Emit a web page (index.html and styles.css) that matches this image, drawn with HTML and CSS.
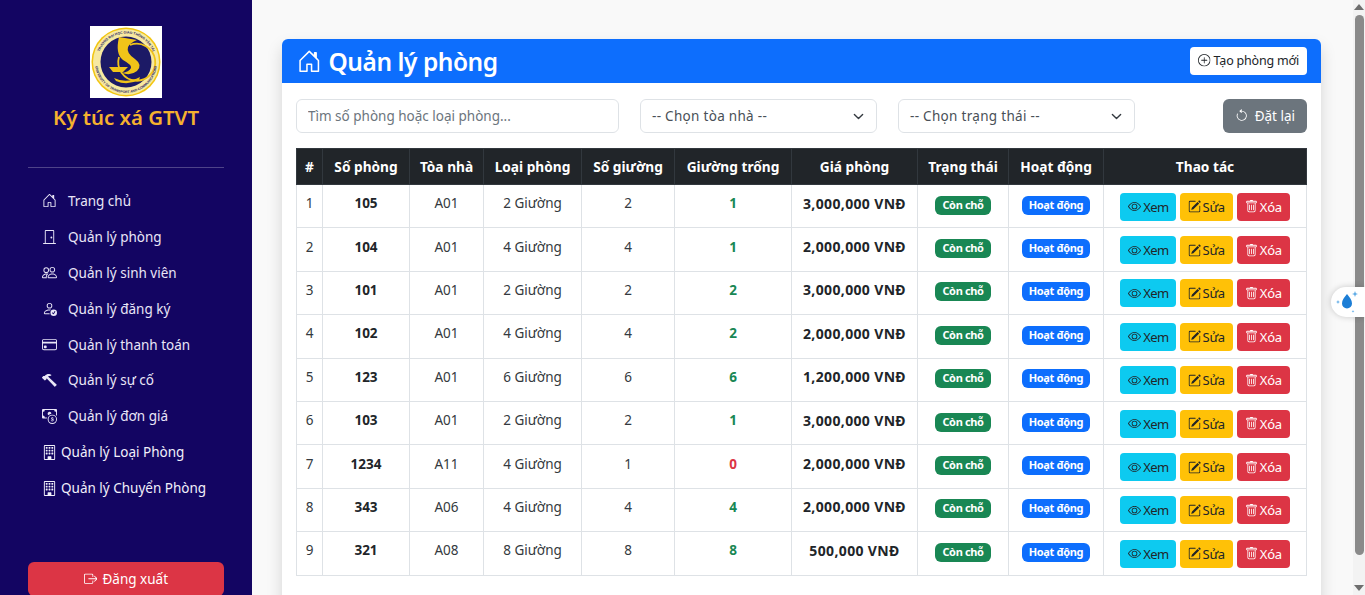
FILE: index.html
```html
<!DOCTYPE html>
<html lang="vi">
<head>
  <meta charset="UTF-8" />
  <meta name="viewport" content="width=device-width, initial-scale=1.0"/>
  <title>Quản lý phòng</title>
  <link rel="stylesheet" href="styles.css">
</head>
<body>
  <!-- icon sprite -->
  <svg class="sprite" xmlns="http://www.w3.org/2000/svg">
    <symbol id="i-house" viewBox="0 0 16 16"><path d="M8.354 1.146a.5.5 0 0 0-.708 0l-6 6A.5.5 0 0 0 1.500 7.500v7a.5.5 0 0 0 .5.5h4.500a.5.5 0 0 0 .5-.5v-4h2v4a.5.5 0 0 0 .5.5H14a.5.5 0 0 0 .5-.5v-7a.5.5 0 0 0-.146-.354L13 5.793V2.500a.5.5 0 0 0-.5-.5h-1a.5.5 0 0 0-.5.5v1.293zM2.500 14V7.707l5.500-5.500 5.500 5.500V14H10v-4a.5.5 0 0 0-.5-.5h-3a.5.5 0 0 0-.5.5v4z"/></symbol>
    <symbol id="i-door" viewBox="0 0 16 16"><path d="M3 2a1 1 0 0 1 1-1h8a1 1 0 0 1 1 1v13h1.5a.5.5 0 0 1 0 1h-13a.5.5 0 0 1 0-1H3zm1 13h8V2H4z"/><path d="M9 9a1 1 0 1 0 2 0 1 1 0 0 0-2 0"/></symbol>
    <symbol id="i-people" viewBox="0 0 16 16"><path d="M15 14s1 0 1-1-1-4-5-4-5 3-5 4 1 1 1 1zm-7.978-1L7 12.996c.001-.264.167-1.03.76-1.72C8.312 10.629 9.282 10 11 10c1.717 0 2.687.63 3.24 1.276.593.69.758 1.457.76 1.72l-.008.002-.014.002zM11 7a2 2 0 1 0 0-4 2 2 0 0 0 0 4m3-2a3 3 0 1 1-6 0 3 3 0 0 1 6 0M6.936 9.28a6 6 0 0 0-1.23-.247A7 7 0 0 0 5 9c-4 0-5 3-5 4q0 1 1 1h4.216A2.24 2.24 0 0 1 5 13c0-1.01.377-2.042 1.09-2.904.243-.294.526-.569.846-.816M4.92 10A5.5 5.5 0 0 0 4 13H1c0-.26.164-1.03.76-1.724.545-.636 1.492-1.256 3.16-1.275ZM1.5 5.5a3 3 0 1 1 6 0 3 3 0 0 1-6 0m3-2a2 2 0 1 0 0 4 2 2 0 0 0 0-4"/></symbol>
    <symbol id="i-person-check" viewBox="0 0 16 16"><path d="M12.5 16a3.5 3.5 0 1 0 0-7 3.5 3.5 0 0 0 0 7m1.679-4.493-1.335 2.226a.75.75 0 0 1-1.174.144l-.774-.773a.5.5 0 0 1 .708-.708l.547.548 1.17-1.951a.5.5 0 1 1 .858.514M11 5a3 3 0 1 1-6 0 3 3 0 0 1 6 0M8 7a2 2 0 1 0 0-4 2 2 0 0 0 0 4"/><path d="M8.256 14a4.5 4.5 0 0 1-.229-1.004H3c.001-.246.154-.986.832-1.664C4.484 10.68 5.711 10 8 10q.39 0 .74.025c.226-.341.496-.65.804-.918Q8.844 9.002 8 9c-5 0-6 3-6 4s1 1 1 1z"/></symbol>
    <symbol id="i-card" viewBox="0 0 16 16"><path d="M0 4a2 2 0 0 1 2-2h12a2 2 0 0 1 2 2v8a2 2 0 0 1-2 2H2a2 2 0 0 1-2-2zm2-1a1 1 0 0 0-1 1v1h14V4a1 1 0 0 0-1-1zm13 4H1v5a1 1 0 0 0 1 1h12a1 1 0 0 0 1-1z"/><path d="M2 10a1 1 0 0 1 1-1h1a1 1 0 0 1 1 1v1a1 1 0 0 1-1 1H3a1 1 0 0 1-1-1z"/></symbol>
    <symbol id="i-hammer" viewBox="0 0 16 16"><path d="M9.972 2.508a.5.5 0 0 0-.16-.556l-.178-.129a5 5 0 0 0-2.076-.783C6.215.862 4.504 1.229 2.84 3.133H1.786a.5.5 0 0 0-.354.147L.146 4.567a.5.5 0 0 0 0 .706l2.571 2.579a.5.5 0 0 0 .708 0l1.286-1.29a.5.5 0 0 0 .146-.353V5.57l8.387 8.873A.5.5 0 0 0 14 14.5l1.5-1.5a.5.5 0 0 0 .017-.689l-9.129-8.63c.747-.456 1.772-.839 3.112-.839a.5.5 0 0 0 .472-.334"/></symbol>
    <symbol id="i-cash" viewBox="0 0 16 16"><path d="M11 15a4 4 0 1 0 0-8 4 4 0 0 0 0 8m5-4a5 5 0 1 1-10 0 5 5 0 0 1 10 0"/><path d="M9.438 11.944c.047.596.518 1.06 1.363 1.116v.44h.375v-.443c.875-.061 1.386-.529 1.386-1.207 0-.618-.39-.936-1.09-1.1l-.296-.07v-1.2c.376.043.614.248.671.532h.658c-.047-.575-.54-1.024-1.329-1.073V8.5h-.375v.45c-.747.073-1.255.522-1.255 1.158 0 .562.378.92 1.007 1.066l.248.061v1.272c-.384-.058-.639-.27-.696-.563h-.668zm1.36-1.354c-.369-.085-.569-.26-.569-.522 0-.294.216-.514.572-.578v1.1zm.432.746c.449.104.655.272.655.569 0 .339-.257.571-.709.614v-1.195z"/><path d="M1 0a1 1 0 0 0-1 1v8a1 1 0 0 0 1 1h4.083q.088-.517.258-1H3a2 2 0 0 0-2-2V3a2 2 0 0 0 2-2h10a2 2 0 0 0 2 2v3.528c.38.34.717.728 1 1.154V1a1 1 0 0 0-1-1z"/><path d="M9.998 5.083 10 5a2 2 0 1 0-3.132 1.65 6 6 0 0 1 3.13-1.567"/></symbol>
    <symbol id="i-building" viewBox="0 0 16 16"><path d="M4 2.5a.5.5 0 0 1 .5-.5h1a.5.5 0 0 1 .5.5v1a.5.5 0 0 1-.5.5h-1a.5.5 0 0 1-.5-.5zm3 0a.5.5 0 0 1 .5-.5h1a.5.5 0 0 1 .5.5v1a.5.5 0 0 1-.5.5h-1a.5.5 0 0 1-.5-.5zm3.5-.5a.5.5 0 0 0-.5.5v1a.5.5 0 0 0 .5.5h1a.5.5 0 0 0 .5-.5v-1a.5.5 0 0 0-.5-.5zM4 5.5a.5.5 0 0 1 .5-.5h1a.5.5 0 0 1 .5.5v1a.5.5 0 0 1-.5.5h-1a.5.5 0 0 1-.5-.5zM7.5 5a.5.5 0 0 0-.5.5v1a.5.5 0 0 0 .5.5h1a.5.5 0 0 0 .5-.5v-1a.5.5 0 0 0-.5-.5zm2.5.5a.5.5 0 0 1 .5-.5h1a.5.5 0 0 1 .5.5v1a.5.5 0 0 1-.5.5h-1a.5.5 0 0 1-.5-.5zM4.5 8a.5.5 0 0 0-.5.5v1a.5.5 0 0 0 .5.5h1a.5.5 0 0 0 .5-.5v-1a.5.5 0 0 0-.5-.5zm2.5.5a.5.5 0 0 1 .5-.5h1a.5.5 0 0 1 .5.5v1a.5.5 0 0 1-.5.5h-1a.5.5 0 0 1-.5-.5zm3.5-.5a.5.5 0 0 0-.5.5v1a.5.5 0 0 0 .5.5h1a.5.5 0 0 0 .5-.5v-1a.5.5 0 0 0-.5-.5z"/><path d="M2 1a1 1 0 0 1 1-1h10a1 1 0 0 1 1 1v14a1 1 0 0 1-1 1H3a1 1 0 0 1-1-1zm11 0H3v14h3v-2.5a.5.5 0 0 1 .5-.5h3a.5.5 0 0 1 .5.5V15h3z"/></symbol>
    <symbol id="i-logout" viewBox="0 0 16 16"><path d="M10 12.5a.5.5 0 0 1-.5.5h-8a.5.5 0 0 1-.5-.5v-9a.5.5 0 0 1 .5-.5h8a.5.5 0 0 1 .5.5v2a.5.5 0 0 0 1 0v-2A1.5 1.5 0 0 0 9.5 2h-8A1.5 1.5 0 0 0 0 3.5v9A1.5 1.5 0 0 0 1.5 14h8a1.5 1.5 0 0 0 1.5-1.5v-2a.5.5 0 0 0-1 0z"/><path d="M15.854 8.354a.5.5 0 0 0 0-.708l-3-3a.5.5 0 0 0-.708.708L14.293 7.5H5.5a.5.5 0 0 0 0 1h8.793l-2.147 2.146a.5.5 0 0 0 .708.708z"/></symbol>
    <symbol id="i-plus" viewBox="0 0 16 16"><path d="M8 15A7 7 0 1 1 8 1a7 7 0 0 1 0 14m0 1A8 8 0 1 0 8 0a8 8 0 0 0 0 16"/><path d="M8 4a.5.5 0 0 1 .5.5v3h3a.5.5 0 0 1 0 1h-3v3a.5.5 0 0 1-1 0v-3h-3a.5.5 0 0 1 0-1h3v-3A.5.5 0 0 1 8 4"/></symbol>
    <symbol id="i-reset" viewBox="0 0 16 16"><path d="M8 3a5 5 0 1 1-4.546 2.914.5.5 0 0 0-.908-.417A6 6 0 1 0 8 2z"/><path d="M8 4.466V.534a.25.25 0 0 0-.41-.192L5.23 2.308a.25.25 0 0 0 0 .384l2.36 1.966A.25.25 0 0 0 8 4.466"/></symbol>
    <symbol id="i-eye" viewBox="0 0 16 16"><path d="M16 8s-3-5.5-8-5.5S0 8 0 8s3 5.5 8 5.5S16 8 16 8M1.173 8a13 13 0 0 1 1.66-2.043C4.12 4.668 5.88 3.5 8 3.5s3.879 1.168 5.168 2.457A13 13 0 0 1 14.828 8q-.086.13-.195.288c-.335.48-.83 1.12-1.465 1.755C11.879 11.332 10.119 12.5 8 12.5s-3.879-1.168-5.168-2.457A13 13 0 0 1 1.172 8z"/><path d="M8 5.5a2.5 2.5 0 1 0 0 5 2.5 2.5 0 0 0 0-5M4.5 8a3.5 3.5 0 1 1 7 0 3.5 3.5 0 0 1-7 0"/></symbol>
    <symbol id="i-edit" viewBox="0 0 16 16"><path d="M15.502 1.94a.5.5 0 0 1 0 .706L14.459 3.69l-2-2L13.502.646a.5.5 0 0 1 .707 0l1.293 1.293zm-1.75 2.456-2-2L4.939 9.21a.5.5 0 0 0-.121.196l-.805 2.414a.25.25 0 0 0 .316.316l2.414-.805a.5.5 0 0 0 .196-.12l6.813-6.814z"/><path d="M1 13.5A1.5 1.5 0 0 0 2.5 15h11a1.5 1.5 0 0 0 1.5-1.5v-6a.5.5 0 0 0-1 0v6a.5.5 0 0 1-.5.5h-11a.5.5 0 0 1-.5-.5v-11a.5.5 0 0 1 .5-.5H9a.5.5 0 0 0 0-1H2.5A1.5 1.5 0 0 0 1 2.5z"/></symbol>
    <symbol id="i-trash" viewBox="0 0 16 16"><path d="M5.5 5.5A.5.5 0 0 1 6 6v6a.5.5 0 0 1-1 0V6a.5.5 0 0 1 .5-.5m2.5 0a.5.5 0 0 1 .5.5v6a.5.5 0 0 1-1 0V6a.5.5 0 0 1 .5-.5m3 .5a.5.5 0 0 0-1 0v6a.5.5 0 0 0 1 0z"/><path d="M14.5 3a1 1 0 0 1-1 1H13v9a2 2 0 0 1-2 2H5a2 2 0 0 1-2-2V4h-.5a1 1 0 0 1-1-1V2a1 1 0 0 1 1-1H6a1 1 0 0 1 1-1h2a1 1 0 0 1 1 1h3.5a1 1 0 0 1 1 1zM4.118 4 4 4.059V13a1 1 0 0 0 1 1h6a1 1 0 0 0 1-1V4.059L11.882 4zM2.5 3h11V2h-11z"/></symbol>
    <symbol id="i-chevron" viewBox="0 0 16 16"><path fill="none" stroke="currentColor" stroke-linecap="round" stroke-linejoin="round" stroke-width="2" d="m2 5 6 6 6-6"/></symbol>
  </svg>

  <aside class="sidebar">
    <div class="brand">
      <svg class="logo" viewBox="0 0 72 72" xmlns="http://www.w3.org/2000/svg">
        <rect width="72" height="72" fill="#fff"/>
        <circle cx="36" cy="36" r="34.5" fill="#f2c511"/>
        <circle cx="36" cy="36" r="33" fill="#f7e9a0"/>
        <circle cx="36" cy="36" r="25.500" fill="#1c1a66"/>
        <path d="M29 31 A18.500 18.500 0 1 0 40 19" fill="none" stroke="#f0c419" stroke-width="1.800"/>
        <path d="M29 11 L47 14 Q40 17 38 21 Q36 27 45 33 Q53 39 47 45 Q41 50 32 47 Q39 46 41 42 Q42 39 33 34 Q25 28 29 11 Z" fill="#f0c419"/>
        <path d="M19 41 L38 41 L33 46 L23 46 Z" fill="#f0c419"/>
        <path d="M24 52 Q36 58 50 51 L49 54 Q37 60 26 55 Z" fill="#f0c419"/>
        <path id="logoTop" d="M7.500 36 A28.500 28.500 0 0 1 64.500 36" fill="none"/>
        <path id="logoBot" d="M5 36 A31 31 0 0 0 67 36" fill="none"/>
        <text class="logo-ring"><textPath href="#logoTop" startOffset="50%" text-anchor="middle">TRƯỜNG ĐẠI HỌC GIAO THÔNG VẬN TẢI</textPath></text>
        <text class="logo-ring"><textPath href="#logoBot" startOffset="50%" text-anchor="middle">UNIVERSITY OF TRANSPORT AND COMMUNICATIONS</textPath></text>
      </svg>
      <h2>Ký túc xá GTVT</h2>
    </div>
    <hr class="divider">
    <nav class="side-nav">
      <a href="#"><svg class="icon"><use href="#i-house"/></svg>Trang chủ</a>
      <a href="#"><svg class="icon"><use href="#i-door"/></svg>Quản lý phòng</a>
      <a href="#"><svg class="icon"><use href="#i-people"/></svg>Quản lý sinh viên</a>
      <a href="#"><svg class="icon"><use href="#i-person-check"/></svg>Quản lý đăng ký</a>
      <a href="#"><svg class="icon"><use href="#i-card"/></svg>Quản lý thanh toán</a>
      <a href="#"><svg class="icon"><use href="#i-hammer"/></svg>Quản lý sự cố</a>
      <a href="#"><svg class="icon"><use href="#i-cash"/></svg>Quản lý đơn giá</a>
      <a href="#" class="tight"><svg class="icon"><use href="#i-building"/></svg>Quản lý Loại Phòng</a>
      <a href="#" class="tight"><svg class="icon"><use href="#i-building"/></svg>Quản lý Chuyển Phòng</a>
    </nav>
    <button class="logout"><svg class="icon"><use href="#i-logout"/></svg>Đăng xuất</button>
  </aside>

  <main class="main">
    <section class="card">
      <header class="card-head">
        <h1><svg class="icon"><use href="#i-house"/></svg>Quản lý phòng</h1>
        <button class="btn-new"><svg class="icon"><use href="#i-plus"/></svg>Tạo phòng mới</button>
      </header>
      <div class="card-body">
        <div class="filters">
          <input class="field search" type="text" placeholder="Tìm số phòng hoặc loại phòng...">
          <div class="field select">-- Chọn tòa nhà --<svg class="icon"><use href="#i-chevron"/></svg></div>
          <div class="field select">-- Chọn trạng thái --<svg class="icon"><use href="#i-chevron"/></svg></div>
          <button class="btn-reset"><svg class="icon"><use href="#i-reset"/></svg>Đặt lại</button>
        </div>
        <table class="rooms">
          <colgroup>
            <col class="c1"><col class="c2"><col class="c3"><col class="c4"><col class="c5">
            <col class="c6"><col class="c7"><col class="c8"><col class="c9"><col class="c10">
          </colgroup>
          <thead>
            <tr>
              <th>#</th><th>Số phòng</th><th>Tòa nhà</th><th>Loại phòng</th><th>Số giường</th>
              <th>Giường trống</th><th>Giá phòng</th><th>Trạng thái</th><th>Hoạt động</th><th>Thao tác</th>
            </tr>
          </thead>
          <tbody>
            <tr>
              <td>1</td><td><b>105</b></td><td>A01</td><td>2 Giường</td><td>2</td>
              <td><b class="free">1</b></td><td><b class="price">3,000,000 VNĐ</b></td>
              <td class="tag"><span class="badge green">Còn chỗ</span></td><td class="tag"><span class="badge blue">Hoạt động</span></td>
              <td class="act"><div class="actions"><a class="btn view" href="#"><svg class="icon"><use href="#i-eye"/></svg>Xem</a><a class="btn edit" href="#"><svg class="icon"><use href="#i-edit"/></svg>Sửa</a><a class="btn del" href="#"><svg class="icon"><use href="#i-trash"/></svg>Xóa</a></div></td>
            </tr>
            <tr>
              <td>2</td><td><b>104</b></td><td>A01</td><td>4 Giường</td><td>4</td>
              <td><b class="free">1</b></td><td><b class="price">2,000,000 VNĐ</b></td>
              <td class="tag"><span class="badge green">Còn chỗ</span></td><td class="tag"><span class="badge blue">Hoạt động</span></td>
              <td class="act"><div class="actions"><a class="btn view" href="#"><svg class="icon"><use href="#i-eye"/></svg>Xem</a><a class="btn edit" href="#"><svg class="icon"><use href="#i-edit"/></svg>Sửa</a><a class="btn del" href="#"><svg class="icon"><use href="#i-trash"/></svg>Xóa</a></div></td>
            </tr>
            <tr>
              <td>3</td><td><b>101</b></td><td>A01</td><td>2 Giường</td><td>2</td>
              <td><b class="free">2</b></td><td><b class="price">3,000,000 VNĐ</b></td>
              <td class="tag"><span class="badge green">Còn chỗ</span></td><td class="tag"><span class="badge blue">Hoạt động</span></td>
              <td class="act"><div class="actions"><a class="btn view" href="#"><svg class="icon"><use href="#i-eye"/></svg>Xem</a><a class="btn edit" href="#"><svg class="icon"><use href="#i-edit"/></svg>Sửa</a><a class="btn del" href="#"><svg class="icon"><use href="#i-trash"/></svg>Xóa</a></div></td>
            </tr>
            <tr>
              <td>4</td><td><b>102</b></td><td>A01</td><td>4 Giường</td><td>4</td>
              <td><b class="free">2</b></td><td><b class="price">2,000,000 VNĐ</b></td>
              <td class="tag"><span class="badge green">Còn chỗ</span></td><td class="tag"><span class="badge blue">Hoạt động</span></td>
              <td class="act"><div class="actions"><a class="btn view" href="#"><svg class="icon"><use href="#i-eye"/></svg>Xem</a><a class="btn edit" href="#"><svg class="icon"><use href="#i-edit"/></svg>Sửa</a><a class="btn del" href="#"><svg class="icon"><use href="#i-trash"/></svg>Xóa</a></div></td>
            </tr>
            <tr>
              <td>5</td><td><b>123</b></td><td>A01</td><td>6 Giường</td><td>6</td>
              <td><b class="free">6</b></td><td><b class="price">1,200,000 VNĐ</b></td>
              <td class="tag"><span class="badge green">Còn chỗ</span></td><td class="tag"><span class="badge blue">Hoạt động</span></td>
              <td class="act"><div class="actions"><a class="btn view" href="#"><svg class="icon"><use href="#i-eye"/></svg>Xem</a><a class="btn edit" href="#"><svg class="icon"><use href="#i-edit"/></svg>Sửa</a><a class="btn del" href="#"><svg class="icon"><use href="#i-trash"/></svg>Xóa</a></div></td>
            </tr>
            <tr>
              <td>6</td><td><b>103</b></td><td>A01</td><td>2 Giường</td><td>2</td>
              <td><b class="free">1</b></td><td><b class="price">3,000,000 VNĐ</b></td>
              <td class="tag"><span class="badge green">Còn chỗ</span></td><td class="tag"><span class="badge blue">Hoạt động</span></td>
              <td class="act"><div class="actions"><a class="btn view" href="#"><svg class="icon"><use href="#i-eye"/></svg>Xem</a><a class="btn edit" href="#"><svg class="icon"><use href="#i-edit"/></svg>Sửa</a><a class="btn del" href="#"><svg class="icon"><use href="#i-trash"/></svg>Xóa</a></div></td>
            </tr>
            <tr>
              <td>7</td><td><b>1234</b></td><td>A11</td><td>4 Giường</td><td>1</td>
              <td><b class="full">0</b></td><td><b class="price">2,000,000 VNĐ</b></td>
              <td class="tag"><span class="badge green">Còn chỗ</span></td><td class="tag"><span class="badge blue">Hoạt động</span></td>
              <td class="act"><div class="actions"><a class="btn view" href="#"><svg class="icon"><use href="#i-eye"/></svg>Xem</a><a class="btn edit" href="#"><svg class="icon"><use href="#i-edit"/></svg>Sửa</a><a class="btn del" href="#"><svg class="icon"><use href="#i-trash"/></svg>Xóa</a></div></td>
            </tr>
            <tr>
              <td>8</td><td><b>343</b></td><td>A06</td><td>4 Giường</td><td>4</td>
              <td><b class="free">4</b></td><td><b class="price">2,000,000 VNĐ</b></td>
              <td class="tag"><span class="badge green">Còn chỗ</span></td><td class="tag"><span class="badge blue">Hoạt động</span></td>
              <td class="act"><div class="actions"><a class="btn view" href="#"><svg class="icon"><use href="#i-eye"/></svg>Xem</a><a class="btn edit" href="#"><svg class="icon"><use href="#i-edit"/></svg>Sửa</a><a class="btn del" href="#"><svg class="icon"><use href="#i-trash"/></svg>Xóa</a></div></td>
            </tr>
            <tr>
              <td>9</td><td><b>321</b></td><td>A08</td><td>8 Giường</td><td>8</td>
              <td><b class="free">8</b></td><td><b class="price">500,000 VNĐ</b></td>
              <td class="tag"><span class="badge green">Còn chỗ</span></td><td class="tag"><span class="badge blue">Hoạt động</span></td>
              <td class="act"><div class="actions"><a class="btn view" href="#"><svg class="icon"><use href="#i-eye"/></svg>Xem</a><a class="btn edit" href="#"><svg class="icon"><use href="#i-edit"/></svg>Sửa</a><a class="btn del" href="#"><svg class="icon"><use href="#i-trash"/></svg>Xóa</a></div></td>
            </tr>
          </tbody>
        </table>
      </div>
    </section>
  </main>

  <!-- page scrollbar as it looks in the browser -->
  <div class="rail">
    <span class="arrow up"></span>
    <span class="thumb"></span>
    <span class="arrow down"></span>
  </div>

  <!-- floating widget over the scrollbar -->
  <div class="drop-widget">
    <svg viewBox="0 0 24 24" xmlns="http://www.w3.org/2000/svg">
      <path fill="#1c7ed6" d="M12 4c2.800 3.600 5 6.200 5 9.400a5 5 0 0 1-10 0C7 10.200 9.200 7.600 12 4z"/>
      <path fill="#5aa9e6" d="M20 1l.8 2.200L23 4l-2.200.8L20 7l-.8-2.200L17 4l2.200-.8zM3 10l.6 1.400L5 12l-1.400.6L3 14l-.6-1.400L1 12l1.400-.6zM18 20l.4 1 1 .4-1 .4-.4 1-.4-1-1-.4 1-.4z"/>
    </svg>
  </div>
</body>
</html>
```

FILE: styles.css
```css
* {
  box-sizing: border-box;
}

html, body {
  height: 100%;
}

body {
  margin: 0;
  display: flex;
  overflow: hidden;
  font-family: "Noto Sans", "Open Sans", sans-serif;
  font-size: 14px;
  color: #212529;
  background-color: #f9f9f9;
}

.sprite {
  display: none;
}

.icon {
  width: 1em;
  height: 1em;
  flex-shrink: 0;
  fill: currentColor;
}

/* sidebar */
.sidebar {
  width: 252px;
  height: 100%;
  flex-shrink: 0;
  display: flex;
  flex-direction: column;
  padding: 26px 28px 0;
  background-color: #130562;
  color: #fff;
}

.brand {
  text-align: center;
}

.logo {
  display: block;
  width: 72px;
  height: 72px;
  margin: 0 auto;
}

.logo-ring {
  font-family: "Liberation Sans", sans-serif;
  font-size: 3.4px;
  font-weight: 700;
  fill: #1c1a66;
}

.brand h2 {
  margin: 4px 0 0;
  font-size: 20.4px;
  line-height: 30px;
  font-weight: 600;
  color: #f5b12f;
}

.divider {
  width: 100%;
  margin: 35px 0 15px;
  border: 0;
  border-top: 1px solid rgba(255, 255, 255, 0.25);
}

.side-nav a {
  display: flex;
  align-items: center;
  gap: 11px;
  height: 35.9px;
  padding-left: 14px;
  font-size: 13.5px;
  color: #e9e6f7;
  text-decoration: none;
}

.side-nav a .icon {
  width: 15px;
  height: 15px;
}

.side-nav a.tight {
  gap: 4px;
  color: #f1f0fa;
}

.logout {
  display: flex;
  align-items: center;
  justify-content: center;
  gap: 5px;
  height: 34px;
  margin-top: auto;
  margin-bottom: -1px;
  border: 0;
  border-radius: 6px;
  background-color: #dc3545;
  color: #fff;
  font: inherit;
  font-size: 13.5px;
}

/* content */
.main {
  flex: 1;
  min-width: 0;
  height: 100%;
  overflow: hidden;
  padding: 39px 32px 24px 30px;
}

.rail {
  width: 12px;
  height: 100%;
  flex-shrink: 0;
  display: flex;
  flex-direction: column;
  align-items: center;
  padding: 4px 0;
  background-color: #f3f3f3;
}

.thumb {
  width: 9px;
  height: 540px;
  margin: 5px 0 auto;
  border-radius: 5px;
  background-color: #8a8a8a;
}

.arrow {
  width: 0;
  height: 0;
  border-left: 5px solid transparent;
  border-right: 5px solid transparent;
}

.arrow.up {
  border-bottom: 6px solid #6e6e6e;
}

.arrow.down {
  border-top: 6px solid #6e6e6e;
}

.card {
  background-color: #fff;
  border-radius: 6px;
  box-shadow: 0 8px 16px rgba(0, 0, 0, 0.15);
  overflow: hidden;
}

.card-head {
  height: 44px;
  display: flex;
  align-items: center;
  justify-content: space-between;
  padding: 0 14px 0 15px;
  background-color: #0d6efd;
  color: #fff;
}

.card-head h1 {
  display: flex;
  align-items: center;
  gap: 7px;
  margin: 0;
  font-size: 24.5px;
  font-weight: 600;
  letter-spacing: -0.45px;
}

.btn-new {
  display: flex;
  align-items: center;
  gap: 3px;
  height: 28px;
  margin-top: -1px;
  padding: 0 8px;
  border: 0;
  border-radius: 4px;
  background-color: #fff;
  color: #212529;
  font: inherit;
  font-size: 12.5px;
  letter-spacing: -0.2px;
}

.card-body {
  padding: 16px 14px 30px;
}

.filters {
  display: flex;
  align-items: center;
  gap: 21px;
  margin-bottom: 15px;
}

.field {
  height: 34px;
  padding: 0 12px 0 11px;
  border: 1px solid #dee2e6;
  border-radius: 6px;
  background-color: #fff;
  color: #495057;
  font: inherit;
  font-size: 13.5px;
}

.field::placeholder {
  color: #6c757d;
}

.search {
  width: 323px;
}

.select {
  width: 237px;
  display: flex;
  align-items: center;
  justify-content: space-between;
  letter-spacing: 0.3px;
}

.select .icon {
  width: 11px;
  height: 11px;
  color: #343a40;
}

.btn-reset {
  display: flex;
  align-items: center;
  gap: 6px;
  height: 34px;
  margin-left: auto;
  padding: 0 12px;
  border: 0;
  border-radius: 6px;
  background-color: #6c757d;
  color: #fff;
  font: inherit;
  font-size: 13.5px;
}

/* table */
.rooms {
  width: 1010px;
  table-layout: fixed;
  border-collapse: collapse;
}

.c1 { width: 26px; }
.c2 { width: 87px; }
.c3 { width: 74px; }
.c4 { width: 98px; }
.c5 { width: 93px; }
.c6 { width: 117px; }
.c7 { width: 126px; }
.c8 { width: 91px; }
.c9 { width: 95px; }
.c10 { width: 203px; }

.rooms th, .rooms td {
  border: 1px solid #dee2e6;
  text-align: center;
  padding: 0;
  font-size: 13.5px;
}

.rooms th {
  height: 36px;
  background-color: #212529;
  border-color: #32383e;
  color: #fff;
  font-weight: 700;
  font-size: 13.7px;
}

.rooms td {
  height: 43.4px;
  padding-bottom: 6px;
  color: #343a40;
}

.rooms td.tag {
  padding-bottom: 3px;
}

.rooms td.act {
  padding-top: 1px;
  padding-bottom: 0;
}

.rooms td b {
  color: #212529;
}

.rooms td b.price {
  font-size: 14px;
  letter-spacing: 0.35px;
}

.rooms td b.free {
  color: #198754;
}

.rooms td b.full {
  color: #dc3545;
}

.badge {
  display: inline-block;
  padding: 2px 7px 3px;
  border-radius: 6px;
  color: #fff;
  font-size: 11px;
  font-weight: 700;
  line-height: 14px;
  letter-spacing: -0.35px;
}

.badge.green {
  background-color: #198754;
}

.badge.blue {
  background-color: #0d6efd;
}

.actions {
  display: flex;
  justify-content: center;
  gap: 4px;
}

.btn {
  display: flex;
  align-items: center;
  gap: 2px;
  height: 28px;
  padding: 0 8px;
  border-radius: 4px;
  color: #212529;
  font-size: 13px;
  letter-spacing: -0.3px;
  text-decoration: none;
}

.btn.view {
  padding-right: 7px;
  background-color: #0dcaf0;
  letter-spacing: -0.6px;
}

.btn.edit {
  background-color: #ffc107;
}

.btn.del {
  background-color: #dc3545;
  color: #fff;
}

.drop-widget {
  position: fixed;
  top: 287px;
  right: 0;
  width: 34px;
  height: 30px;
  padding: 3px 6px 3px 4px;
  border-radius: 15px 0 0 15px;
  background-color: #fff;
  box-shadow: 0 0 6px rgba(0, 0, 0, 0.2);
}

.drop-widget svg {
  display: block;
  width: 24px;
  height: 24px;
}
```
